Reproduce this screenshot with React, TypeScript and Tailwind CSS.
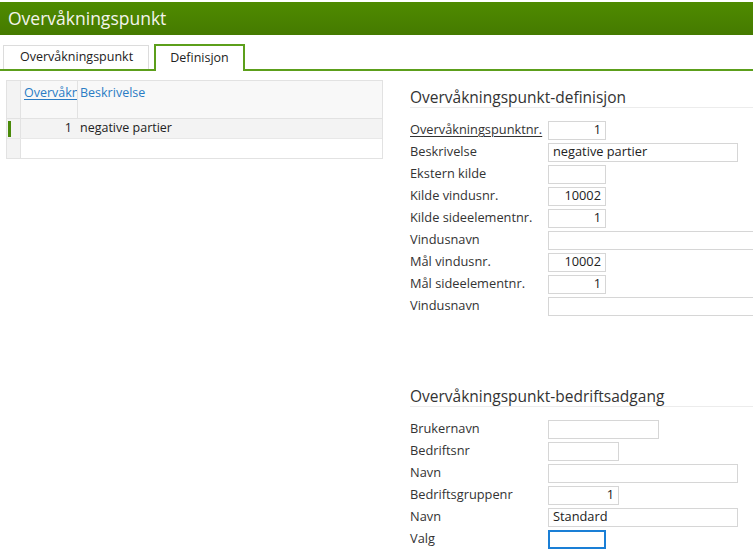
const font = { fontFamily: '"Open Sans", "Noto Sans", sans-serif' }

type Field = {
  label: string
  value?: string
  width: string
  align?: 'left' | 'right'
  underline?: boolean
  focused?: boolean
}

const definition: Field[] = [
  { label: 'Overvåkningspunktnr.', value: '1', width: 'w-[58px]', align: 'right', underline: true },
  { label: 'Beskrivelse', value: 'negative partier', width: 'w-[190px]' },
  { label: 'Ekstern kilde', width: 'w-[58px]' },
  { label: 'Kilde vindusnr.', value: '10002', width: 'w-[58px]', align: 'right' },
  { label: 'Kilde sideelementnr.', value: '1', width: 'w-[58px]', align: 'right' },
  { label: 'Vindusnavn', width: 'w-[220px]' },
  { label: 'Mål vindusnr.', value: '10002', width: 'w-[58px]', align: 'right' },
  { label: 'Mål sideelementnr.', value: '1', width: 'w-[58px]', align: 'right' },
  { label: 'Vindusnavn', width: 'w-[220px]' },
]

const access: Field[] = [
  { label: 'Brukernavn', width: 'w-[111px]' },
  { label: 'Bedriftsnr', width: 'w-[71px]' },
  { label: 'Navn', width: 'w-[190px]' },
  { label: 'Bedriftsgruppenr', value: '1', width: 'w-[71px]', align: 'right' },
  { label: 'Navn', value: 'Standard', width: 'w-[190px]' },
  { label: 'Valg', width: 'w-[58px]', focused: true },
]

function FieldRow({ f }: { f: Field }) {
  return (
    <div className="flex items-center h-[22px]">
      <span
        className={`w-[138px] shrink-0 text-[12.8px] text-[#333] ${f.underline ? 'underline underline-offset-2' : ''}`}
      >
        {f.label}
      </span>
      <div
        className={`${f.width} shrink-0 h-[19px] flex items-center px-[4px] text-[12.8px] text-[#222] bg-white ${
          f.focused ? 'border-2 border-[#1a7fd6]' : 'border border-[#d6d6d6]'
        } ${f.align === 'right' ? 'justify-end' : ''}`}
      >
        {f.value}
      </div>
    </div>
  )
}

function Section({ title, fields, className }: { title: string; fields: Field[]; className?: string }) {
  return (
    <div className={className}>
      <div className="h-[22px] border-b border-[#ececec] text-[15.5px] leading-[22px] text-[#333] whitespace-nowrap">
        {title}
      </div>
      <div className="mt-[11px] flex flex-col">
        {fields.map((f, i) => (
          <FieldRow key={i} f={f} />
        ))}
      </div>
    </div>
  )
}

export default function App() {
  return (
    <div className="w-[753px] h-[555px] overflow-hidden bg-white" style={font}>
      {/* Title bar */}
      <div className="mt-[2px] h-[33px] bg-gradient-to-b from-[#4f8b00] to-[#457a00] flex items-center pl-[8px]">
        <span className="text-[17.5px] text-[#f4f4ec] leading-none">Overvåkningspunkt</span>
      </div>

      {/* Tabs */}
      <div className="h-[36px] flex items-end pl-[3px] border-b-2 border-[#5c9f1b]">
        <div className="w-[146px] h-[24px] border border-b-0 border-[#dcdcdc] flex items-center pl-[16px] text-[12.5px] text-[#222]">
          Overvåkningspunkt
        </div>
        <div className="ml-[5px] w-[91px] h-[27px] -mb-[2px] bg-white border-2 border-b-0 border-[#5c9f1b] flex items-center justify-center text-[12.5px] text-[#222]">
          Definisjon
        </div>
      </div>

      <div className="flex items-start">
        {/* Grid */}
        <div className="ml-[6px] mt-[9px] w-[377px] shrink-0 border border-[#e2e2e2] text-[12.5px]">
          <div className="flex h-[38px] bg-[#f8f8f8] border-b border-[#e2e2e2]">
            <div className="w-[14px] shrink-0 border-r border-[#e2e2e2] bg-[#f3f3f3]" />
            <div className="w-[57px] shrink-0 border-r border-[#e2e2e2] pl-[3px] pt-[3px] overflow-hidden whitespace-nowrap">
              <span className="text-[#2a7cc4] underline underline-offset-2">Overvåkn</span>
            </div>
            <div className="flex-1 pl-[2px] pt-[3px] text-[#2a7cc4]">Beskrivelse</div>
          </div>
          <div className="flex h-[20px] bg-[#f3f3f3] border-b border-[#e8e8e8]">
            <div className="w-[14px] shrink-0 border-r border-[#e2e2e2] flex items-center pl-[1px]">
              <div className="w-[3px] h-[16px] bg-[#4a8a0a]" />
            </div>
            <div className="w-[57px] shrink-0 flex items-center justify-end pr-[6px] text-[#222]">1</div>
            <div className="flex-1 flex items-center pl-[2px] text-[#222]">negative partier</div>
          </div>
          <div className="flex h-[19px]">
            <div className="w-[14px] shrink-0 border-r border-[#e2e2e2] bg-[#f3f3f3]" />
            <div className="flex-1" />
          </div>
        </div>

        {/* Form */}
        <div className="ml-[27px] flex-1 min-w-0">
          <Section title="Overvåkningspunkt-definisjon" fields={definition} className="mt-[15px]" />
          <Section title="Overvåkningspunkt-bedriftsadgang" fields={access} className="mt-[68px]" />
        </div>
      </div>
    </div>
  )
}
